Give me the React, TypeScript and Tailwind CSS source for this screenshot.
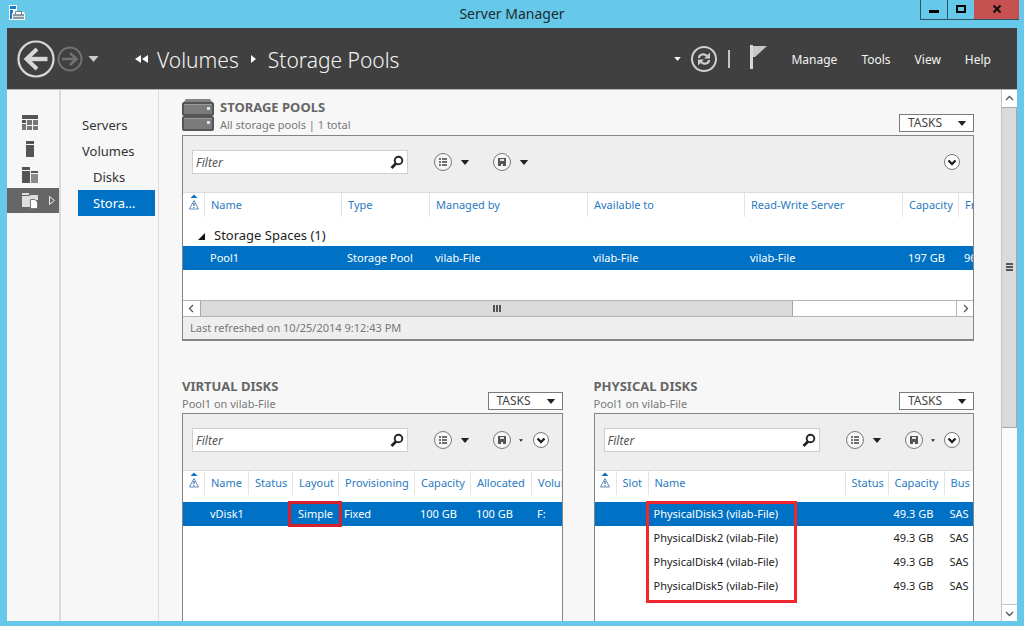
import React from "react";
import clsx from "clsx";

interface Column {
    label: string;
    width?: string;
}

interface PanelProps {
    title: string;
    subtitle: string;
    icon?: React.ReactNode;
    filterId: string;
    compact?: boolean;
    className?: string;
    children: React.ReactNode;
}

const poolColumns: Column[] = [
    { label: "Name", width: "w-[137px]" },
    { label: "Type", width: "w-[88px]" },
    { label: "Managed by", width: "w-[158px]" },
    { label: "Available to", width: "w-[157px]" },
    { label: "Read-Write Server", width: "w-[158px]" },
    { label: "Capacity", width: "w-[56px]" },
    { label: "Free Space" },
];

const virtualColumns: Column[] = [
    { label: "Name", width: "w-[44px]" },
    { label: "Status", width: "w-[44px]" },
    { label: "Layout", width: "w-[46px]" },
    { label: "Provisioning", width: "w-[76px]" },
    { label: "Capacity", width: "w-[56px]" },
    { label: "Allocated", width: "w-[61px]" },
    { label: "Volume" },
];

const physicalColumns: Column[] = [
    { label: "Slot", width: "w-[32px]" },
    { label: "Name", width: "w-[197px]" },
    { label: "Status", width: "w-[43px]" },
    { label: "Capacity", width: "w-[56px]" },
    { label: "Bus" },
];

const physicalDisks = ["PhysicalDisk3", "PhysicalDisk2", "PhysicalDisk4", "PhysicalDisk5"];

const Caret: React.FC<{ className?: string }> = ({ className }) => (
    <svg viewBox="0 0 10 6" className={clsx("fill-current", className)} aria-hidden="true">
        <path d="M0 0h10L5 6z" />
    </svg>
);

const AppIcon = () => (
    <svg width="16" height="16" viewBox="0 0 16 16" aria-hidden="true">
        <path d="M0 0h8v15H0z" fill="#fff" />
        <path d="M1 1h6v3H1zM1 5h3v9H1z" fill="#1979ca" />
        <path d="M4 7h11l1 2v6H3V9z" fill="#fff" />
        <path d="M4 9h11v5H4z" fill="#8d9aa5" />
        <path d="M6.500 9V6.500h6V9" fill="none" stroke="#6f7c88" />
        <path d="M4 11.500h11" stroke="#d7dde2" />
    </svg>
);

const StorageIcon = () => (
    <svg width="32" height="34" viewBox="0 0 32 34" aria-hidden="true">
        <path d="M4 1h24l3 4H1z" fill="#858585" />
        <rect x="1" y="5" width="30" height="12" rx="1" fill="#7b7b7b" stroke="#555" strokeWidth="2" />
        <rect x="1" y="19" width="30" height="13" rx="1" fill="#7b7b7b" stroke="#555" strokeWidth="2" />
        <path d="M2 6.500h28M2 20.500h28" stroke="#9d9d9d" />
        <path d="M25 9h3v3h-3zM25 23h3v3h-3z" fill="#e4e4e4" />
    </svg>
);

const DashboardIcon = () => (
    <svg width="18" height="16" viewBox="0 0 18 16" fill="#555" aria-hidden="true">
        <path d="M1 0h16v4H1zM1 5h4v3H1z" />
        <path d="M6 5h5v5H6zM12 5h5v5h-5zM1 9h4v6H1zM6 11h5v4H6zM12 11h5v4h-5z" fill="#777" />
    </svg>
);

const ServerIcon = () => (
    <svg width="18" height="16" viewBox="0 0 18 16" fill="#555" aria-hidden="true">
        <path d="M5 0h8v3H5zM5 4h8v12H5z" />
    </svg>
);

const AllServersIcon = () => (
    <svg width="18" height="16" viewBox="0 0 18 16" aria-hidden="true">
        <path d="M1 0h8v3H1zM1 4h8v12H1zM10 4h7v2h-7z" fill="#555" />
        <path d="M10 7h7v9h-7z" fill="#8a8a8a" />
    </svg>
);

const FileServicesIcon = () => (
    <svg width="18" height="16" viewBox="0 0 18 16" aria-hidden="true">
        <path d="M1 0h7v2H1zM1 3h7l2-1h7v5H10v7H1z" fill="#dedede" />
        <path d="M9.500 6.500H14l2.500 2.500v6.500h-7z" fill="#fff" stroke="#777" />
    </svg>
);

const SearchIcon = () => (
    <svg width="14" height="14" viewBox="0 0 14 14" fill="none" stroke="#222" aria-hidden="true">
        <circle cx="8.500" cy="5.500" r="3.800" strokeWidth="1.900" />
        <path d="M6 8.500L1.500 13" strokeWidth="2.800" />
    </svg>
);

const ListIcon = () => (
    <svg width="20" height="20" viewBox="0 0 20 20" fill="none" aria-hidden="true">
        <circle cx="10" cy="10" r="8.500" fill="#f7f7f7" stroke="#777" />
        <path d="M6 7h2M6 10h2M6 13h2M9 7h5M9 10h5M9 13h5" stroke="#444" strokeWidth="1.500" />
    </svg>
);

const SaveIcon = () => (
    <svg width="20" height="20" viewBox="0 0 20 20" fill="none" aria-hidden="true">
        <circle cx="10" cy="10" r="8.500" fill="#f7f7f7" stroke="#777" />
        <path d="M6 6h8v8H6z" fill="#555" />
        <path d="M8 7h4v2H8zM9 12h2v2H9z" fill="#e4e4e4" />
    </svg>
);

const ExpandIcon = () => (
    <svg width="18" height="18" viewBox="0 0 18 18" fill="none" aria-hidden="true">
        <circle cx="9" cy="9" r="7.500" fill="#fff" stroke="#777" />
        <path d="M5.500 7.500L9 11l3.500-3.500" stroke="#222" strokeWidth="2.400" />
    </svg>
);

const Chevron: React.FC<{ d: string }> = ({ d }) => (
    <svg width="9" height="9" viewBox="0 0 9 9" fill="none" stroke="#555" strokeWidth="1.300" aria-hidden="true">
        <path d={d} />
    </svg>
);

const AlertIcon = () => (
    <svg width="12" height="18" viewBox="0 0 12 18" fill="none" className="shrink-0" aria-hidden="true">
        <path d="M2.500 5L6 1.500 9.500 5z" fill="#0a72c0" />
        <path d="M6 7.500l4.500 8.500h-9z" stroke="#5b8dbd" />
        <path d="M6 10v3M6 14v1" stroke="#3a5f9a" strokeWidth="1.200" />
    </svg>
);

const TableHead: React.FC<{ columns: Column[] }> = ({ columns }) => (
    <thead>
        <tr className="h-[31px] align-top text-left whitespace-nowrap text-[#2a7ac0]">
            <th scope="col" className="w-[21px] p-0 font-normal" aria-label="Alerts">
                <div className="flex h-6 items-start justify-center">
                    <AlertIcon />
                </div>
            </th>
            {columns.map((col) => (
                <th key={col.label} scope="col" className={clsx("overflow-hidden p-0 font-normal", col.width)}>
                    <div className="flex h-6 items-center border-l border-[#e4e4e4] pl-[6px]">{col.label}</div>
                </th>
            ))}
        </tr>
    </thead>
);

const Panel: React.FC<PanelProps> = ({ title, subtitle, icon, filterId, compact, className, children }) => (
    <section className={clsx("flex min-w-0 flex-col", className)}>
        <div className="flex items-end">
            {icon && <div className="mr-[6px] pb-[3px]">{icon}</div>}
            <div className={clsx("flex-1", icon && "pb-px")}>
                <h2 className="text-[13px] leading-[18px] font-bold text-[#666]">{title}</h2>
                <p className="text-[11px] leading-[18px] text-[#777]">{subtitle}</p>
            </div>
            <button className="mb-[3px] flex h-[18px] w-[75px] items-center justify-between border border-[#7a7a7a] bg-white pr-[6px] pl-2 text-[12px] text-[#444]">
                TASKS
                <Caret className="h-[5px] w-[10px] text-[#222]" />
            </button>
        </div>
        <div
            className={clsx(
                "flex flex-col border border-[#858585] bg-white",
                compact ? "flex-1 border-b-0" : "border-b-2"
            )}
        >
            <div className="flex items-start border-b border-[#dcdcdc] bg-[#eee] px-[9px] pt-[14px] pb-[18px]">
                <div className="flex h-6 w-[216px] items-center border border-[#d0d0d0] bg-white pr-[3px]">
                    <input
                        id={filterId}
                        type="text"
                        placeholder="Filter"
                        aria-label="Filter"
                        className="h-full min-w-0 flex-1 bg-transparent pl-[3px] text-[12px] italic outline-none placeholder:text-[#555]"
                    />
                    <button aria-label="Search">
                        <SearchIcon />
                    </button>
                </div>
                <div className="ml-[25px] flex h-6 flex-1 items-center">
                    <button className="flex items-center gap-[7px]" aria-label="Grouping">
                        <ListIcon />
                        <Caret className="h-[5px] w-[10px]" />
                    </button>
                    <button className="ml-[22px] flex items-center gap-[7px]" aria-label="Saved queries">
                        <SaveIcon />
                        <Caret className={compact ? "h-[3px] w-[4px]" : "h-[5px] w-[10px]"} />
                    </button>
                    <button className="mr-[3px] ml-auto" aria-label="Expand">
                        <ExpandIcon />
                    </button>
                </div>
            </div>
            {children}
        </div>
    </section>
);

const cell = "truncate p-0 pl-[6px] text-clip";

const railItems = [
    { label: "Dashboard", icon: <DashboardIcon /> },
    { label: "Local Server", icon: <ServerIcon /> },
    { label: "All Servers", icon: <AllServersIcon /> },
];

const App: React.FC = () => (
    <div className="flex h-screen flex-col overflow-hidden bg-[#66c9e9] px-[7px] pb-[5px] font-['Noto_Sans','Open_Sans',sans-serif] text-[11px] text-[#222]">
        <header className="relative flex h-7 shrink-0 items-center justify-center pb-[2px]">
            <div className="absolute top-[5px] left-[2px]">
                <AppIcon />
            </div>
            <h1 className="text-[14px] text-[#1c2a33]">Server Manager</h1>
            <div className="absolute top-0 right-[-2px] flex h-5 border-b border-l border-[#2c5668]">
                <button className="flex w-[27px] items-end justify-center border-r border-[#2c5668] pb-[6px]" aria-label="Minimize">
                    <span className="h-[3px] w-[10px] bg-black" />
                </button>
                <button className="flex w-[26px] items-center justify-center pb-[2px]" aria-label="Maximize">
                    <span className="h-2 w-[10px] border-2 border-black" />
                </button>
                <button className="flex w-[45px] items-center justify-center bg-[#c75050] pb-[2px]" aria-label="Close">
                    <svg width="8" height="8" viewBox="0 0 8 8" stroke="#111" strokeWidth="2.200">
                        <path d="M0.500 0.500l7 7M7.500 0.500l-7 7" />
                    </svg>
                </button>
            </div>
        </header>

        <nav className="flex h-[62px] shrink-0 items-center border-b border-[#b5b5b5] bg-[#404040] pr-[26px] pl-[10px] text-[#f4f4f4]">
            <button aria-label="Back">
                <svg width="38" height="38" viewBox="0 0 38 38" fill="none" stroke="#d8d8d8">
                    <circle cx="19" cy="19" r="17.500" strokeWidth="2.200" />
                    <path d="M30.500 19H10" strokeWidth="4.400" />
                    <path d="M20 9l-10.500 10L20 29" strokeWidth="4" />
                </svg>
            </button>
            <button aria-label="Forward" className="ml-[2px]">
                <svg width="26" height="26" viewBox="0 0 26 26" fill="none" stroke="#717171">
                    <circle cx="13" cy="13" r="11.500" strokeWidth="2" />
                    <path d="M5 13h14M13 7l6.500 6-6.500 6" strokeWidth="2.600" />
                </svg>
            </button>
            <button aria-label="History" className="ml-[5px]">
                <Caret className="h-[6px] w-[11px] text-[#ccc]" />
            </button>
            <div className="ml-[36px] flex items-center text-[21px] font-light">
                <svg width="14" height="8" viewBox="0 0 14 8" fill="#fff" aria-hidden="true">
                    <path d="M6 0v8L0 4zM13 0v8L7 4z" />
                </svg>
                <a href="#volumes" className="pt-1 pl-2">
                    Volumes
                </a>
                <svg width="5" height="8" viewBox="0 0 5 8" fill="#fff" className="mx-3" aria-hidden="true">
                    <path d="M0 0v8l5-4z" />
                </svg>
                <a href="#storage-pools" className="pt-1">
                    Storage Pools
                </a>
            </div>
            <div className="ml-auto flex items-center">
                <Caret className="h-[4px] w-[7px]" />
                <button aria-label="Refresh" className="ml-[9px]">
                    <svg width="28" height="28" viewBox="0 0 28 28" fill="none" stroke="#cfcfcf">
                        <circle cx="14" cy="14" r="12" strokeWidth="2" />
                        <path d="M9 13c0-3.500 5-5 8-2M19 15c0 3.500-5 5-8 2" strokeWidth="2.200" />
                        <path d="M20 7.500v6h-6zM8 20.500v-6h6z" fill="#cfcfcf" stroke="none" />
                    </svg>
                </button>
                <span className="ml-[10px] h-[18px] w-[2px] bg-[#c4c4c4]" />
                <button aria-label="Notifications" className="ml-[20px] pb-[4px]">
                    <svg width="18" height="24" viewBox="0 0 18 24" fill="#c8c8c8">
                        <path d="M0 0h3v24H0z" fill="#d8d8d8" />
                        <path d="M3 1h14L5 12H3z" />
                    </svg>
                </button>
                <div className="ml-[23px] flex gap-6 pt-[3px] text-[12px]">
                    <button>Manage</button>
                    <button>Tools</button>
                    <button>View</button>
                    <button>Help</button>
                </div>
            </div>
        </nav>

        <div className="flex min-h-0 flex-1 bg-[#f7f7f7]">
            <aside className="w-[54px] shrink-0 border-r-2 border-[#dadada] pt-5">
                {railItems.map((item) => (
                    <button key={item.label} aria-label={item.label} className="flex h-[26px] w-full items-center pl-[14px]">
                        {item.icon}
                    </button>
                ))}
                <button
                    aria-label="File and Storage Services"
                    className="flex h-[25px] w-full items-center bg-[#666] pl-[14px]"
                >
                    <FileServicesIcon />
                    <svg width="6" height="9" viewBox="0 0 6 9" fill="none" stroke="#eee" className="ml-[10px]" aria-hidden="true">
                        <path d="M0.500 0.500v8l5-4z" />
                    </svg>
                </button>
            </aside>

            <nav className="flex w-[98px] shrink-0 flex-col border-r border-[#dcdcdc] pt-[22px] pr-[3px] pl-[17px] text-[13px] leading-[26px] text-[#333]">
                <a href="#servers" className="pl-[4px]">Servers</a>
                <a href="#volumes" className="pl-[4px]">Volumes</a>
                <a href="#disks" className="pl-[15px]">Disks</a>
                <a href="#storage-pools" className="truncate bg-[#0072c6] pl-[15px] text-white">Stora...</a>
            </nav>

            <main className="flex min-w-0 flex-1 flex-col overflow-hidden pt-2 pr-[27px] pl-[23px]">
                <Panel title="STORAGE POOLS" subtitle="All storage pools | 1 total" icon={<StorageIcon />} filterId="filter-pools">
                    <table className="w-full table-fixed border-collapse">
                        <TableHead columns={poolColumns} />
                        <tbody>
                            <tr className="h-[22px]">
                                <td colSpan={8} className="p-0 pl-[15px] text-[13px] leading-[18px]">
                                    <svg width="7" height="7" viewBox="0 0 7 7" fill="#111" className="mr-[9px] inline" aria-hidden="true">
                                        <path d="M7 0v7H0z" />
                                    </svg>
                                    Storage Spaces (1)
                                </td>
                            </tr>
                            <tr className="h-6 bg-[#0072c6] text-white">
                                <td />
                                <td className={cell}>Pool1</td>
                                <td className={cell}>Storage Pool</td>
                                <td className={cell}>vilab-File</td>
                                <td className={cell}>vilab-File</td>
                                <td className={cell}>vilab-File</td>
                                <td className={cell}>197 GB</td>
                                <td className={cell}>96.5 GB</td>
                            </tr>
                        </tbody>
                    </table>
                    <div className="mt-[30px] flex h-[17px] border-y border-[#b5b5b5] bg-white">
                        <button className="flex w-[17px] items-center justify-center" aria-label="Scroll left">
                            <Chevron d="M6 1L2.500 4.500L6 8" />
                        </button>
                        <div className="flex flex-1">
                            <div className="flex w-[78.500%] items-center justify-center gap-px border-x border-[#a8a8a8] bg-[#dadada]">
                                <span className="h-[7px] w-[2px] bg-[#555]" />
                                <span className="h-[7px] w-[2px] bg-[#555]" />
                                <span className="h-[7px] w-[2px] bg-[#555]" />
                            </div>
                        </div>
                        <button className="flex w-[17px] items-center justify-center border-l border-[#b5b5b5]" aria-label="Scroll right">
                            <Chevron d="M3 1l3.500 3.500L3 8" />
                        </button>
                    </div>
                    <p className="bg-[#eee] pl-[7px] leading-[22px] text-[#777]">Last refreshed on 10/25/2014 9:12:43 PM</p>
                </Panel>

                <div className="mt-[36px] flex min-h-0 flex-1 gap-[31px]">
                    <Panel title="VIRTUAL DISKS" subtitle="Pool1 on vilab-File" filterId="filter-virtual" compact className="flex-1">
                        <table className="w-full table-fixed border-collapse">
                            <TableHead columns={virtualColumns} />
                            <tbody>
                                <tr className="h-6 bg-[#0072c6] text-white">
                                    <td />
                                    <td className={cell}>vDisk1</td>
                                    <td />
                                    <td className="relative p-0 pl-[6px]">
                                        Simple
                                        <span className="absolute -inset-x-1 -inset-y-px border-[3px] border-[#d8202a]" />
                                    </td>
                                    <td className={cell}>Fixed</td>
                                    <td className={cell}>100 GB</td>
                                    <td className={cell}>100 GB</td>
                                    <td className={cell}>F:</td>
                                </tr>
                            </tbody>
                        </table>
                    </Panel>

                    <Panel title="PHYSICAL DISKS" subtitle="Pool1 on vilab-File" filterId="filter-physical" compact className="flex-1">
                        <table className="w-full table-fixed border-collapse">
                            <TableHead columns={physicalColumns} />
                            <tbody>
                                {physicalDisks.map((disk, i) => (
                                    <tr key={disk} className={clsx("h-6", i === 0 && "bg-[#0072c6] text-white")}>
                                        <td />
                                        <td />
                                        <td className="relative p-0 pl-[6px]">
                                            {disk} (vilab-File)
                                            {i === 0 && (
                                                <span className="absolute -top-px -left-[2px] h-[102px] w-[151px] border-[3px] border-[#f0282e]" />
                                            )}
                                        </td>
                                        <td />
                                        <td className={cell}>49.3 GB</td>
                                        <td className={cell}>SAS</td>
                                    </tr>
                                ))}
                            </tbody>
                        </table>
                    </Panel>
                </div>
            </main>

            <div className="flex w-4 shrink-0 flex-col border-l border-[#c4c4c4] bg-[#fafafa]">
                <button className="flex h-[17px] items-center justify-center bg-white" aria-label="Scroll up">
                    <Chevron d="M1 6l3.500-3.500L8 6" />
                </button>
                <div className="min-h-0 flex-1">
                    <div className="flex h-[64.500%] flex-col items-center justify-center gap-px border-y border-r border-[#a8a8a8] bg-[#dadada]">
                        <span className="h-[2px] w-[7px] bg-[#555]" />
                        <span className="h-[2px] w-[7px] bg-[#555]" />
                        <span className="h-[2px] w-[7px] bg-[#555]" />
                    </div>
                </div>
                <button className="flex h-[17px] items-center justify-center border-t border-[#c4c4c4] bg-white" aria-label="Scroll down">
                    <Chevron d="M1 3l3.500 3.500L8 3" />
                </button>
            </div>
        </div>
    </div>
);

export default App;
